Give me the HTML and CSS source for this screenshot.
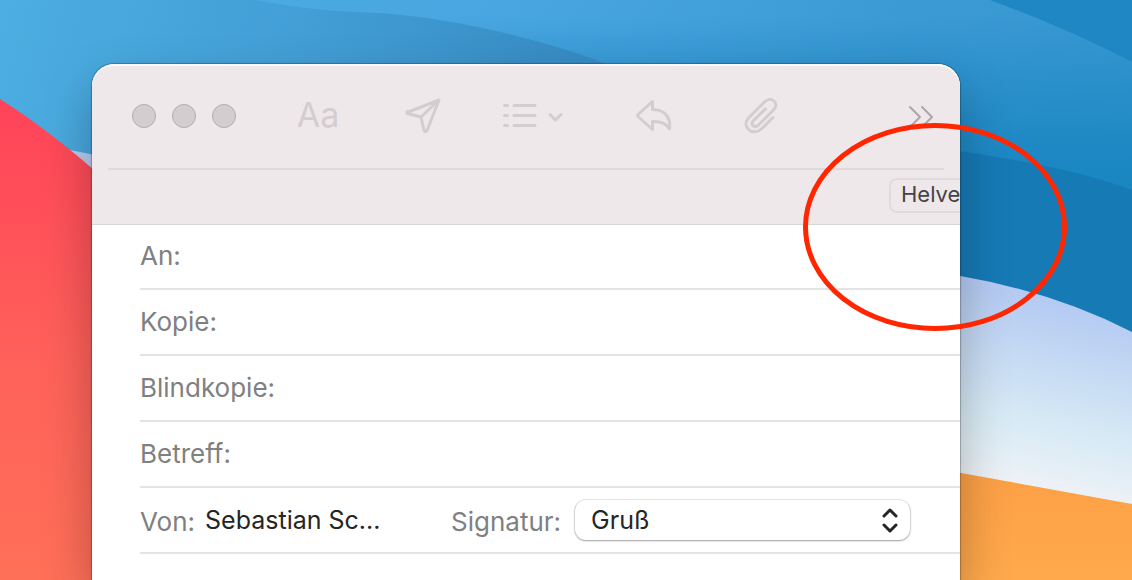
FILE: index.html
```
<!DOCTYPE html>
<html lang="de">
<head>
    <meta charset="utf-8">
    <title>Neue E-Mail</title>
    <link rel="stylesheet" href="styles.css">
</head>
<body>
    <svg class="wallpaper" viewBox="0 0 1132 580" preserveAspectRatio="xMidYMid slice" aria-hidden="true">
        <defs>
            <linearGradient id="sky" x1="0" y1="0" x2="1" y2="0.3">
                <stop offset="0" stop-color="#4caee2"/>
                <stop offset="0.4" stop-color="#4aa6e0"/>
                <stop offset="0.75" stop-color="#3b9ad3"/>
                <stop offset="1" stop-color="#3596d0"/>
            </linearGradient>
            <linearGradient id="fade" gradientUnits="userSpaceOnUse" x1="900" y1="15" x2="900" y2="170">
                <stop offset="0" stop-color="#1a86c2" stop-opacity="0"/>
                <stop offset="1" stop-color="#1a86c2"/>
            </linearGradient>
            <linearGradient id="band" gradientUnits="userSpaceOnUse" x1="0" y1="0" x2="580" y2="160">
                <stop offset="0" stop-color="#4caee2"/>
                <stop offset="0.5" stop-color="#439ed6"/>
                <stop offset="1" stop-color="#358ac1"/>
            </linearGradient>
            <linearGradient id="red" x1="0" y1="0" x2="0" y2="1">
                <stop offset="0" stop-color="#ff4359"/>
                <stop offset="0.55" stop-color="#ff625a"/>
                <stop offset="1" stop-color="#ff7058"/>
            </linearGradient>
            <linearGradient id="lilac" gradientUnits="userSpaceOnUse" x1="1080" y1="310" x2="1040" y2="490">
                <stop offset="0" stop-color="#b5cbf2"/>
                <stop offset="0.65" stop-color="#d7eaf5"/>
                <stop offset="1" stop-color="#eef2f7"/>
            </linearGradient>
            <linearGradient id="orange" x1="0" y1="0" x2="0" y2="1">
                <stop offset="0" stop-color="#fc9f45"/>
                <stop offset="1" stop-color="#ffa94c"/>
            </linearGradient>
        </defs>
        <path fill="url(#sky)" d="M0 0H1132V580H0z"/>
        <path fill="url(#fade)" d="M0 0H1132V250H0z"/>
        <path fill="url(#band)" d="M0 0H255C300 9 335 11 380 13C450 18 540 38 606 64V200H0z"/>
        <path fill="#1f88c4" d="M990 0H1132V62Q1066 28 990 0z"/>
        <path fill="#167ab5" d="M900 144Q1050 160 1132 190V400H900z"/>
        <path fill="url(#lilac)" d="M900 268Q1030 280 1132 332V580H900z"/>
        <path fill="url(#orange)" d="M900 462L1132 504V580H900z"/>
        <path fill="#b9cbef" d="M60 148L110 158V200z"/>
        <path fill="url(#red)" d="M0 99Q52 132 110 184V580H0z"/>
    </svg>

    <main class="window">
        <header class="header">
            <div class="toolbar">
                <div class="lights">
                    <button class="light" aria-label="Schließen"></button>
                    <button class="light" aria-label="Minimieren"></button>
                    <button class="light" aria-label="Vergrößern"></button>
                </div>
                <div class="tools">
                    <button class="tool fonts">Aa</button>
                    <button class="tool send" aria-label="Senden">
                        <svg width="36" height="36" viewBox="0 0 36 36"><path d="M2 14.500L34 2L22 32.500Q20.500 34.500 19 32.500L16 19L2.500 15.500Q1 14.500 2.500 13.500zM16 19L33 3"/></svg>
                    </button>
                    <button class="tool list" aria-label="Listen">
                        <svg width="62" height="36" viewBox="0 0 62 36"><path d="M2.500 7.500h3M2.500 17.500h3M2.500 27.500h3M12 7.500h21M12 17.500h21M12 27.500h21"/><path d="M48 16.500l5.500 5.500l5.500-5.500"/></svg>
                    </button>
                    <button class="tool reply" aria-label="Antworten">
                        <svg width="36" height="36" viewBox="0 0 36 36"><path d="M16.500 3.500L2 16.500Q1 17.500 2 18.500L16.500 31.500V23.500C24 23 30 25 33.500 31C35 21 30 11.500 16.500 11.500z"/></svg>
                    </button>
                    <button class="tool clip" aria-label="Anhang">
                        <svg width="34" height="38" viewBox="0 0 34 38"><path d="M29 20.500L18 31.500C14 35.500 8 36 4.500 32.500C1 29 1 24.500 5 20.500L20.500 5C23.500 2 27.500 1.500 30 4C32.500 6.500 32.500 10 29.500 13L14.500 28C12.500 30 10.500 30 9 28.700C7.500 27 7.800 25.300 9.500 23.500L21.500 12"/></svg>
                    </button>
                </div>
                <button class="tool more" aria-label="Mehr">
                    <svg width="28" height="28" viewBox="0 0 28 28"><path d="M4 5l10 10L4 25M16 5l10 10L16 25"/></svg>
                </button>
            </div>
            <div class="formatbar">
                <button class="font-name">Helve</button>
            </div>
        </header>

        <form class="fields">
            <div class="row">
                <label for="to">An:</label>
                <input id="to" type="text" autocomplete="off">
            </div>
            <div class="row">
                <label for="cc">Kopie:</label>
                <input id="cc" type="text" autocomplete="off">
            </div>
            <div class="row">
                <label for="bcc">Blindkopie:</label>
                <input id="bcc" type="text" autocomplete="off">
            </div>
            <div class="row">
                <label for="subject">Betreff:</label>
                <input id="subject" type="text" autocomplete="off">
            </div>
            <div class="row sender">
                <label for="from">Von:</label>
                <select id="from" class="from"><option>Sebastian Sc...</option></select>
                <label for="signature">Signatur:</label>
                <div class="popup">
                    <select id="signature" class="signature"><option>Gruß</option></select>
                    <svg class="arrows" width="18" height="26" viewBox="0 0 18 26"><path d="M3 8l6-6l6 6M3 17l6 6l6-6"/></svg>
                </div>
            </div>
        </form>
    </main>

    <svg class="marker" viewBox="0 0 264 208" aria-hidden="true"><ellipse cx="132" cy="104" rx="129.500" ry="101.500"/></svg>
</body>
</html>
```
FILE: styles.css
```
body{
    margin: 0;
    min-height: 100vh;
    display: flex;
    position: relative;
    overflow: hidden;
    font-family: Inter, "Liberation Sans", sans-serif;
    font-size: 25px;
}

button, input, select{
    font: inherit;
    padding: 0;
    border: none;
    background: transparent;
    outline: none;
    appearance: none;
}

.wallpaper{
    position: absolute;
    top: 0;
    left: 0;
    width: 100%;
    height: 100%;
    z-index: -1;
}

.window{
    flex: 1;
    min-width: 0;
    margin: 64px 172px 0 92px;
    background: #fff;
    border-radius: 22px 22px 0 0;
    overflow: hidden;
    box-shadow: 0 0 1px 1px rgb(0 0 0 / 25%), 0 24px 50px rgb(0 0 0 / 28%);
}

.header{
    background: #eee8ea;
    border-bottom: 1px solid #d9d5d7;
    box-shadow: inset 0 2px 0 #faf8f9;
    border-radius: 22px 22px 0 0;
}

.toolbar{
    display: flex;
    align-items: center;
    height: 104px;
    margin: 0 16px;
    padding: 0 10px 0 24px;
    border-bottom: 2px solid #dfd9db;
}

.lights{
    display: flex;
    gap: 16px;
}

.light{
    width: 24px;
    height: 24px;
    border-radius: 50%;
    border: 1px solid #b3adaf;
    background: #d3cdcf;
}

.tools{
    display: flex;
    align-items: center;
    gap: 60px;
    margin-left: 56px;
}

.tool{
    display: flex;
    align-items: center;
    justify-content: center;
    flex: none;
    height: 40px;
    color: #d3cdcf;
}

.tool svg{
    fill: none;
    stroke: currentColor;
    stroke-width: 3;
    stroke-linecap: round;
    stroke-linejoin: round;
}

.fonts{
    width: 52px;
    padding-bottom: 3px;
    font-size: 34px;
}

.send{
    width: 38px;
}

.list{
    width: 62px;
}

.reply{
    width: 60px;
}

.clip{
    width: 34px;
}

.more{
    margin-left: auto;
    color: #aca7a9;
}

.more svg{
    stroke-width: 2;
}

.formatbar{
    display: flex;
    justify-content: flex-end;
    height: 54px;
    overflow: hidden;
}

.font-name{
    flex: none;
    width: 160px;
    height: 35px;
    margin: 8px -89px 0 0;
    padding: 0 0 4px 10px;
    text-align: left;
    font-size: 22px;
    color: #454345;
    border: 2px solid #e0dadc;
    border-radius: 8px;
}

.fields{
    margin-top: -1px;
    padding-left: 48px;
}

.row{
    display: flex;
    align-items: center;
    height: 64px;
    border-bottom: 2px solid #e4e4e4;
}

.row label{
    flex: none;
    padding-bottom: 2px;
    font-size: 26px;
    color: #808080;
}

.row input{
    flex: 1;
    min-width: 0;
    padding-left: 12px;
}

.sender .from{
    width: 234px;
    margin: 0 12px 0 10px;
    color: #252525;
}

.sender label{
    padding: 2px 0 0;
}

.popup{
    flex: 1;
    min-width: 0;
    position: relative;
    margin: 0 50px 0 14px;
}

.signature{
    display: block;
    width: 100%;
    height: 40px;
    padding: 0 48px 0 16px;
    color: #252525;
    background: #fff;
    border-radius: 11px;
    box-shadow: 0 0 1px 1px rgb(0 0 0 / 10%), 0 1px 2px rgb(0 0 0 / 30%);
}

.arrows{
    position: absolute;
    right: 11px;
    top: 8px;
    pointer-events: none;
    fill: none;
    stroke: #252525;
    stroke-width: 3;
    stroke-linecap: round;
    stroke-linejoin: round;
}

.marker{
    position: absolute;
    top: 123px;
    right: 65px;
    width: 264px;
    height: 208px;
    pointer-events: none;
    fill: none;
    stroke: #ff2600;
    stroke-width: 5;
}
```
